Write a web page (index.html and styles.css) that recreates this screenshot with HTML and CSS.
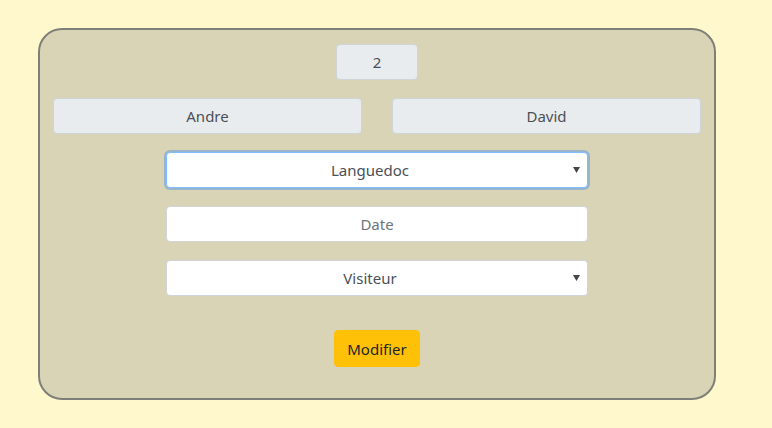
FILE: index.html
```html
<!DOCTYPE html>
<html lang="fr">
<head>
<meta charset="utf-8">
<title>Modifier</title>
<link rel="stylesheet" href="styles.css">
</head>
<body>
<form class="card">
  <div class="row center">
    <input class="field field-id" type="text" value="2" disabled>
  </div>
  <div class="row pair">
    <input class="field" type="text" value="Andre" disabled>
    <input class="field" type="text" value="David" disabled>
  </div>
  <div class="row center">
    <select class="field field-wide select focused">
      <option>Languedoc</option>
    </select>
  </div>
  <div class="row center">
    <input class="field field-wide white" type="text" placeholder="Date">
  </div>
  <div class="row center">
    <select class="field field-wide select">
      <option>Visiteur</option>
    </select>
  </div>
  <div class="row center actions">
    <button type="button" class="btn">Modifier</button>
  </div>
</form>
</body>
</html>
```

FILE: styles.css
```css
* { box-sizing: border-box; }
html, body { margin: 0; padding: 0; }
body {
  background: #fff8cd;
  font-family: "Noto Sans", "Open Sans", sans-serif;
  font-size: 15px;
  color: #495057;
  width: 772px;
  height: 428px;
  overflow: hidden;
}
.card {
  margin: 28px 0 0 38px;
  width: 678px;
  height: 372px;
  background: #d8d4b5;
  border: 2px solid #7f7f7a;
  border-radius: 24px;
  padding: 14px 13px 0 13px;
  display: flex;
  flex-direction: column;
  gap: 18px;
}
.row { display: flex; }
.center { justify-content: center; }
.pair { justify-content: space-between; }
.field {
  font-family: inherit;
  font-size: 15px;
  color: #495057;
  height: 36px;
  border: 1px solid #ced4da;
  border-radius: 4px;
  background: #e9ecef;
  text-align: center;
  text-align-last: center;
  padding: 0 12px;
  outline: none;
  margin: 0;
}
.pair .field { width: 309px; }
.field-id { width: 82px; }
.field-wide { width: 422px; background: #fff; }
.white::placeholder { color: #6c757d; opacity: 1; }
.select {
  -webkit-appearance: none;
  appearance: none;
  background-color: #fff;
  background-image: url("data:image/svg+xml,%3Csvg xmlns='http://www.w3.org/2000/svg' width='8' height='7'%3E%3Cpath d='M0 0h7l-3.5 6z' fill='%23444'/%3E%3C/svg%3E");
  background-repeat: no-repeat;
  background-position: right 6px center;
  padding-right: 26px;
}
.focused {
  border-color: #80bdff;
  box-shadow: 0 0 0 2px rgba(110, 160, 220, 0.6);
}
.actions { margin-top: 16px; }
.btn {
  font-family: inherit;
  font-size: 15px;
  color: #212529;
  background: #ffc107;
  border: 1px solid #ffc107;
  border-radius: 4px;
  height: 37px;
  width: 86px;
  padding: 0;
  cursor: pointer;
}
```
